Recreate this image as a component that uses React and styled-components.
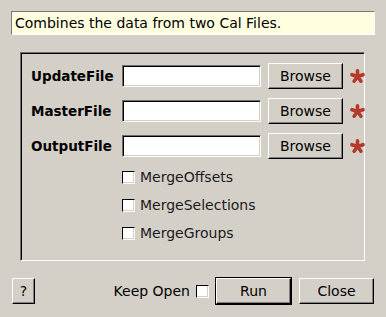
import React from "react";
import styled, { createGlobalStyle } from "styled-components";

const Global = createGlobalStyle`
  html, body { margin: 0; padding: 0; background: #d4d0c8; }
  body { font-family: "DejaVu Sans", sans-serif; font-size: 14px; color: #000; }
`;

const Window = styled.div`
  width: 386px;
  height: 317px;
  box-sizing: border-box;
  padding-top: 11px;
  background: #d4d0c8;
  display: flex;
  flex-direction: column;
`;

const InfoBox = styled.div`
  margin: 0 11px;
  height: 24px;
  box-sizing: border-box;
  background: #ffffe0;
  border-top: 1px solid #7a7a7a;
  border-left: 1px solid #7a7a7a;
  border-bottom: 1px solid #fff;
  border-right: 1px solid #fff;
  padding-left: 3px;
  line-height: 22px;
  white-space: nowrap;
`;

const Group = styled.div`
  margin: 17px 0 0 20px;
  width: 345px;
  height: 209px;
  box-sizing: border-box;
  border-top: 1px solid #6e6e6e;
  border-left: 1px solid #6e6e6e;
  border-bottom: 1px solid #fff;
  border-right: 1px solid #fff;
  box-shadow: inset 1px 1px 0 #000;
  padding: 10px 0 0 10px;
`;

const FileGrid = styled.div`
  display: grid;
  grid-template-columns: 84px 139px 75px 15px;
  grid-auto-rows: 26px;
  column-gap: 7px;
  row-gap: 9px;
  align-items: center;
`;

const FieldLabel = styled.div`
  font-weight: bold;
  font-size: 13.5px;
  white-space: nowrap;
`;

const Entry = styled.div`
  height: 22px;
  box-sizing: border-box;
  background: #fff;
  border-top: 1px solid #6e6e6e;
  border-left: 1px solid #6e6e6e;
  border-bottom: 1px solid #fff;
  border-right: 1px solid #fff;
  box-shadow: inset 1px 1px 0 #000, inset -1px -1px 0 #d4d0c8;
`;

const Button = styled.button`
  width: ${(p) => p.$w || 75}px;
  height: 26px;
  box-sizing: border-box;
  margin: 0;
  padding: 0;
  font: inherit;
  color: #000;
  background: #d4d0c8;
  border-top: 1px solid #fff;
  border-left: 1px solid #fff;
  border-bottom: 1px solid #000;
  border-right: 1px solid #000;
  box-shadow: inset -1px -1px 0 #808080;
  text-align: center;
  cursor: default;
`;

const DefaultFrame = styled.div`
  border: 1px solid #000;
  display: flex;
`;

const Star = styled.svg`
  display: block;
  width: 15px;
  height: 16px;
`;

const Checks = styled.div`
  margin-top: 4px;
  padding-left: 91px;
  display: flex;
  flex-direction: column;
`;

const CheckRow = styled.div`
  height: 28px;
  display: flex;
  align-items: center;
  color: #1a1a1a;
`;

const Box = styled.span`
  display: inline-block;
  width: 13px;
  height: 13px;
  box-sizing: border-box;
  background: #fff;
  border-top: 1px solid #000;
  border-left: 1px solid #000;
  border-bottom: 1px solid #fff;
  border-right: 1px solid #fff;
  box-shadow: inset -1px -1px 0 #d4d0c8;
  margin-right: ${(p) => p.$mr ?? 5}px;
  margin-left: ${(p) => p.$ml ?? 0}px;
`;

const BottomBar = styled.div`
  margin-top: 16px;
  height: 28px;
  padding: 0 12px;
  display: flex;
  align-items: center;
`;

const Spacer = styled.div`
  flex: 1;
`;

const KeepLabel = styled.span`
  white-space: nowrap;
`;

const Gap = styled.div`
  width: ${(p) => p.$w}px;
`;

function Asterisk() {
  const arms = [-90, -18, 54, 126, 198];
  return (
    <Star viewBox="0 0 15 16">
      {arms.map((a) => {
        const r = (a * Math.PI) / 180;
        return (
          <line
            key={a}
            x1="7.5"
            y1="8.5"
            x2={7.5 + Math.cos(r) * 5.8}
            y2={8.5 + Math.sin(r) * 5.8}
            stroke="#b33a2c"
            strokeWidth="3.6"
            strokeLinecap="round"
          />
        );
      })}
    </Star>
  );
}

const files = ["UpdateFile", "MasterFile", "OutputFile"];
const options = ["MergeOffsets", "MergeSelections", "MergeGroups"];

export default function App() {
  return (
    <>
      <Global />
      <Window>
        <InfoBox>Combines the data from two Cal Files.</InfoBox>
        <Group>
          <FileGrid>
            {files.map((f) => (
              <React.Fragment key={f}>
                <FieldLabel>{f}</FieldLabel>
                <Entry />
                <Button>Browse</Button>
                <Asterisk />
              </React.Fragment>
            ))}
          </FileGrid>
          <Checks>
            {options.map((o) => (
              <CheckRow key={o}>
                <Box />
                {o}
              </CheckRow>
            ))}
          </Checks>
        </Group>
        <BottomBar>
          <Button $w={23}>?</Button>
          <Spacer />
          <KeepLabel>Keep Open</KeepLabel>
          <Box $ml={6} $mr={6} />
          <DefaultFrame>
            <Button $w={75}>Run</Button>
          </DefaultFrame>
          <Gap $w={7} />
          <Button $w={75}>Close</Button>
        </BottomBar>
      </Window>
    </>
  );
}
